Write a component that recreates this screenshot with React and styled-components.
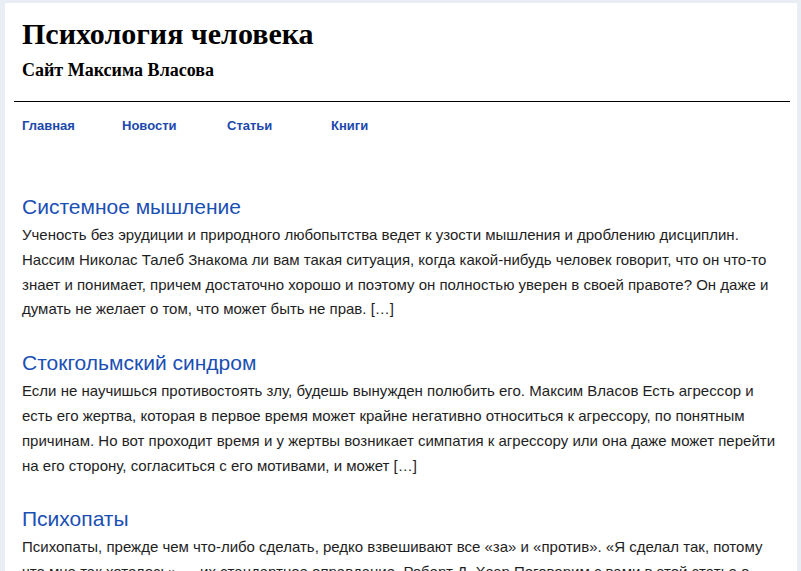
import React from "react";
import styled, { createGlobalStyle } from "styled-components";

const posts = [
  {
    title: "Системное мышление",
    text: "Ученость без эрудиции и природного любопытства ведет к узости мышления и дроблению дисциплин. Нассим Николас Талеб Знакома ли вам такая ситуация, когда какой-нибудь человек говорит, что он что-то знает и понимает, причем достаточно хорошо и поэтому он полностью уверен в своей правоте? Он даже и думать не желает о том, что может быть не прав. […]",
  },
  {
    title: "Стокгольмский синдром",
    text: "Если не научишься противостоять злу, будешь вынужден полюбить его. Максим Власов Есть агрессор и есть его жертва, которая в первое время может крайне негативно относиться к агрессору, по понятным причинам. Но вот проходит время и у жертвы возникает симпатия к агрессору или она даже может перейти на его сторону, согласиться с его мотивами, и может […]",
  },
  {
    title: "Психопаты",
    text: "Психопаты, прежде чем что-либо сделать, редко взвешивают все «за» и «против». «Я сделал так, потому что мне так хотелось» — их стандартное оправдание. Роберт Д. Хаэр Поговорим с вами в этой статье о психопатах, о том, кто они такие и как их распознать. […]",
  },
];

const navItems = [
  { label: "Главная", width: 100 },
  { label: "Новости", width: 105 },
  { label: "Статьи", width: 104 },
  { label: "Книги", width: 100 },
];

export default function App() {
  return (
    <>
      <GlobalStyle />
      <Page>
        <Header>
          <SiteTitle>Психология человека</SiteTitle>
          <SiteDesc>Сайт Максима Власова</SiteDesc>
        </Header>
        <Rule />
        <Nav>
          {navItems.map((item) => (
            <NavLink key={item.label} href="#" $w={item.width}>
              {item.label}
            </NavLink>
          ))}
        </Nav>
        <Main>
          {posts.map((post) => (
            <Post key={post.title}>
              <PostTitle href="#">{post.title}</PostTitle>
              <Excerpt>{post.text}</Excerpt>
            </Post>
          ))}
        </Main>
      </Page>
    </>
  );
}

const GlobalStyle = createGlobalStyle`
  html, body {
    margin: 0;
    padding: 0;
    background: #e8eef4;
    overflow: hidden;
  }
`;

const Page = styled.div`
  margin: 3px 4px 0 5px;
  background: #fff;
  min-height: 568px;
`;

const Header = styled.header`
  padding: 13px 17px 0;
`;

const SiteTitle = styled.h1`
  margin: 0;
  font-family: "Liberation Serif", serif;
  font-weight: 700;
  font-size: 30px;
  line-height: 36px;
  color: #000;
`;

const SiteDesc = styled.p`
  margin: 7px 0 0;
  font-family: "Liberation Serif", serif;
  font-weight: 700;
  font-size: 18px;
  line-height: 22px;
  color: #000;
`;

const Rule = styled.hr`
  margin: 20px 7px 0 9px;
  border: none;
  border-top: 1px solid #000;
  height: 0;
`;

const Nav = styled.nav`
  display: flex;
  padding: 16px 17px 0;
`;

const NavLink = styled.a`
  width: ${(p) => p.$w}px;
  font-family: "Liberation Sans", Arial, sans-serif;
  font-weight: 700;
  font-size: 13px;
  line-height: 16px;
  color: #1c48ad;
  text-decoration: none;
`;

const Main = styled.main`
  padding: 60px 22px 0 17px;
`;

const Post = styled.article`
  margin-bottom: 28px;
`;

const PostTitle = styled.a`
  display: block;
  font-family: "Liberation Sans", Arial, sans-serif;
  font-size: 21px;
  line-height: 25px;
  color: #1a4fb4;
  text-decoration: none;
  margin-bottom: 4px;
`;

const Excerpt = styled.p`
  margin: 0;
  font-family: "Liberation Sans", Arial, sans-serif;
  font-size: 15px;
  line-height: 24.8px;
  color: #1e1e1e;
`;
